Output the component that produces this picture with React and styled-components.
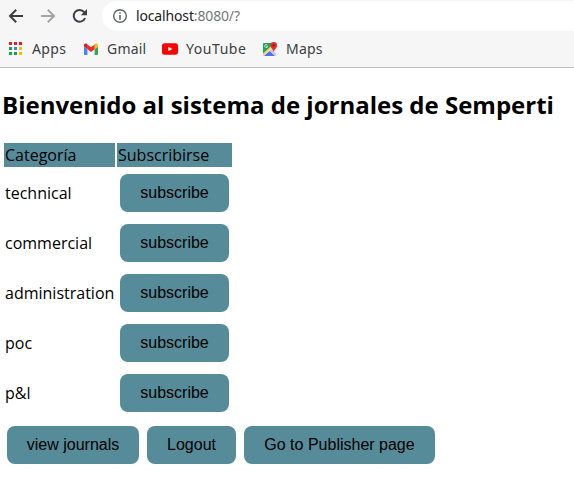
import React from "react";
import styled, { createGlobalStyle } from "styled-components";

const GlobalStyle = createGlobalStyle`
  * { box-sizing: border-box; }
  html, body { margin: 0; padding: 0; background: #fff; overflow: hidden; }
`;

const Page = styled.div`
  width: 574px;
  height: 492px;
  overflow: hidden;
  color: #000;
  font-family: "Open Sans", "Noto Sans", sans-serif;
  font-size: 16px;
`;

const BrowserChrome = styled.header`
  height: 68px;
  background: #f6f6f6;
  border-bottom: 1px solid #bcbcbc;
  color: #3c4043;
  font-family: "Noto Sans", sans-serif;
`;

const Toolbar = styled.div`
  display: flex;
  height: 31px;
  padding-top: 1px;
`;

const NavButtons = styled.div`
  display: flex;
  width: 102px;
  padding: 7px 0 0 8px;
  gap: 16px;
  svg { flex: none; display: block; }
`;

const AddressBar = styled.div`
  flex: 1;
  display: flex;
  align-items: center;
  height: 30px;
  padding-left: 10px;
  background: #fff;
  border-radius: 15px 0 0 15px;
`;

const Address = styled.span`
  margin-left: 8px;
  font-size: 14px;
  line-height: 30px;
  letter-spacing: -0.15px;
  color: #202124;
  white-space: nowrap;
`;

const Port = styled.span`
  color: #74777b;
`;

const Bookmarks = styled.nav`
  display: flex;
  height: 36px;
  padding-left: 7px;
`;

const Bookmark = styled.div`
  display: flex;
  align-items: center;
  flex: none;
  width: ${(p) => p.$width}px;
  gap: ${(p) => p.$gap || 8}px;
  font-size: 14px;
  line-height: 36px;
  letter-spacing: ${(p) => p.$spacing}px;
  white-space: nowrap;
  svg { flex: none; display: block; }
`;

const Content = styled.main`
  padding-left: 2px;
`;

const Title = styled.h1`
  margin: 0;
  padding-top: 20px;
  height: 73px;
  font-size: 24px;
  line-height: 33px;
  font-weight: 700;
  white-space: nowrap;
`;

const Table = styled.table`
  border-collapse: separate;
  border-spacing: 2px;
  table-layout: fixed;
  width: 232px;
`;

const HeadCell = styled.th`
  width: ${(p) => p.$width}px;
  height: 24px;
  padding: 1px;
  background: #568c9a;
  font-weight: 400;
  line-height: 22px;
  text-align: left;
`;

const Cell = styled.td`
  height: 48px;
  padding: 1px;
  line-height: 22px;
  white-space: nowrap;
  vertical-align: middle;
`;

const Button = styled.button`
  display: block;
  width: ${(p) => p.$width}px;
  height: 38px;
  margin: ${(p) => p.$margin || "0"};
  padding: 0;
  border: 0;
  border-radius: 8px;
  background: #568c9a;
  color: #000;
  font: 16px/38px "Liberation Sans", Arial, sans-serif;
  text-align: center;
  white-space: nowrap;
`;

const Actions = styled.div`
  display: flex;
  gap: 8px;
  padding: 7px 0 0 5px;
`;

const BackIcon = () => (
  <svg width="16" height="16" viewBox="0 0 16 16" fill="none" stroke="#3c4043" strokeWidth="2">
    <path d="M15 8H2.5M8.2 1.8L2 8l6.2 6.2" />
  </svg>
);

const ForwardIcon = () => (
  <svg width="16" height="16" viewBox="0 0 16 16" fill="none" stroke="#a5a6a8" strokeWidth="2">
    <path d="M1 8h12.5M7.8 1.8L14 8l-6.2 6.2" />
  </svg>
);

const ReloadIcon = () => (
  <svg width="16" height="16" viewBox="0 0 16 16">
    <path d="M13.1 10A5.9 5.9 0 1 1 12.2 4.1L14 5.9" fill="none" stroke="#3c4043" strokeWidth="2" />
    <path d="M15 1v6.2H8.8z" fill="#3c4043" />
  </svg>
);

const InfoIcon = () => (
  <svg width="16" height="16" viewBox="0 0 16 16">
    <circle cx="8" cy="8" r="6.3" fill="none" stroke="#5f6368" strokeWidth="1.4" />
    <path d="M7.2 4.2h1.6v1.6H7.2zM7.2 7.1h1.6v4.6H7.2z" fill="#5f6368" />
  </svg>
);

const AppsIcon = () => (
  <svg width="16" height="16" viewBox="0 0 16 16" shapeRendering="crispEdges">
    <path d="M2 1h3v3H2zM7 1h3v3H7zM12 1h3v3h-3z" fill="#f01528" />
    <path d="M2 6h3v3H2zM2 11h3v3H2zM7 11h3v3H7z" fill="#12a150" />
    <path d="M7 6h3v3H7z" fill="#3f7df5" />
    <path d="M12 6h3v3h-3zM12 11h3v3h-3z" fill="#fbb900" />
  </svg>
);

const GmailIcon = () => (
  <svg width="16" height="16" viewBox="0 0 16 16">
    <path d="M1 5.5l3.4 2.4V14H2.1A1.1 1.1 0 0 1 1 12.9z" fill="#4285f4" />
    <path d="M11.6 7.9L15 5.5v7.4a1.1 1.1 0 0 1-1.1 1.1h-2.3z" fill="#34a853" />
    <path d="M4.2 3.5L8 6.3l3.8-2.8v4.5L8 10.9 4.2 8z" fill="#f02b24" />
    <path d="M1 5.5V4.1c0-1.7 1.7-2.1 2.7-1.3l.7.5v4.7z" fill="#dc1d20" />
    <path d="M11.6 8V3.3l.7-.5c1-.8 2.7-.4 2.7 1.3v1.4z" fill="#fbbc04" />
  </svg>
);

const YouTubeIcon = () => (
  <svg width="16" height="16" viewBox="0 0 16 16">
    <rect y="2.3" width="16" height="11.4" rx="2.7" fill="#f00" />
    <path d="M6.3 5.7v4.6L10.4 8z" fill="#fff" />
  </svg>
);

const MapsIcon = () => (
  <svg width="16" height="16" viewBox="0 0 16 16">
    <rect x="1" y="2" width="13" height="13" rx="1" fill="#e6e8eb" />
    <path d="M2 2h8.5v3L1 13V3a1 1 0 0 1 1-1z" fill="#1da462" />
    <path d="M2 15l5.6-5L13 15z" fill="#4c6ff3" />
    <path d="M1 12.6L9 5l1 1.2L1.6 14.6 1 14z" fill="#ffd04b" />
    <path d="M9.3 8.2L14 13v1a1 1 0 0 1-.8.9L7.9 9.7z" fill="#c5c8cb" />
    <path d="M4.3 5.4h1.4a1.5 1.5 0 1 1-.4-1.4" stroke="#d8f0df" strokeWidth=".9" fill="none" />
    <path d="M11.7 1a3.4 3.4 0 0 1 3.4 3.4c0 2.5-2.7 3.4-3.4 6.7-.7-3.3-3.4-4.2-3.4-6.7A3.4 3.4 0 0 1 11.7 1z" fill="#e92d2d" />
    <circle cx="11.7" cy="4.4" r="1.2" fill="#861f19" />
  </svg>
);

const bookmarks = [
  { label: "Apps", Icon: AppsIcon, width: 76, spacing: 0.4, gap: 9 },
  { label: "Gmail", Icon: GmailIcon, width: 79, spacing: 0.2 },
  { label: "YouTube", Icon: YouTubeIcon, width: 100, spacing: 0.55 },
  { label: "Maps", Icon: MapsIcon, width: 80, spacing: 0.2 },
];

const categories = ["technical", "commercial", "administration", "poc", "p&l"];

const actions = [
  { label: "view journals", width: 132 },
  { label: "Logout", width: 89 },
  { label: "Go to Publisher page", width: 191 },
];

export default function App() {
  return (
    <Page>
      <GlobalStyle />
      <BrowserChrome>
        <Toolbar>
          <NavButtons>
            <BackIcon />
            <ForwardIcon />
            <ReloadIcon />
          </NavButtons>
          <AddressBar>
            <InfoIcon />
            <Address>
              localhost<Port>:8080/?</Port>
            </Address>
          </AddressBar>
        </Toolbar>
        <Bookmarks>
          {bookmarks.map(({ label, Icon, width, spacing, gap }) => (
            <Bookmark key={label} $width={width} $spacing={spacing} $gap={gap}>
              <Icon />
              {label}
            </Bookmark>
          ))}
        </Bookmarks>
      </BrowserChrome>
      <Content>
        <Title>Bienvenido al sistema de jornales de Semperti</Title>
        <Table>
          <thead>
            <tr>
              <HeadCell $width={111}>Categoría</HeadCell>
              <HeadCell $width={115}>Subscribirse</HeadCell>
            </tr>
          </thead>
          <tbody>
            {categories.map((name) => (
              <tr key={name}>
                <Cell>{name}</Cell>
                <Cell>
                  <Button $width={109} $margin="4px 2px">subscribe</Button>
                </Cell>
              </tr>
            ))}
          </tbody>
        </Table>
        <Actions>
          {actions.map(({ label, width }) => (
            <Button key={label} $width={width}>{label}</Button>
          ))}
        </Actions>
      </Content>
    </Page>
  );
}
